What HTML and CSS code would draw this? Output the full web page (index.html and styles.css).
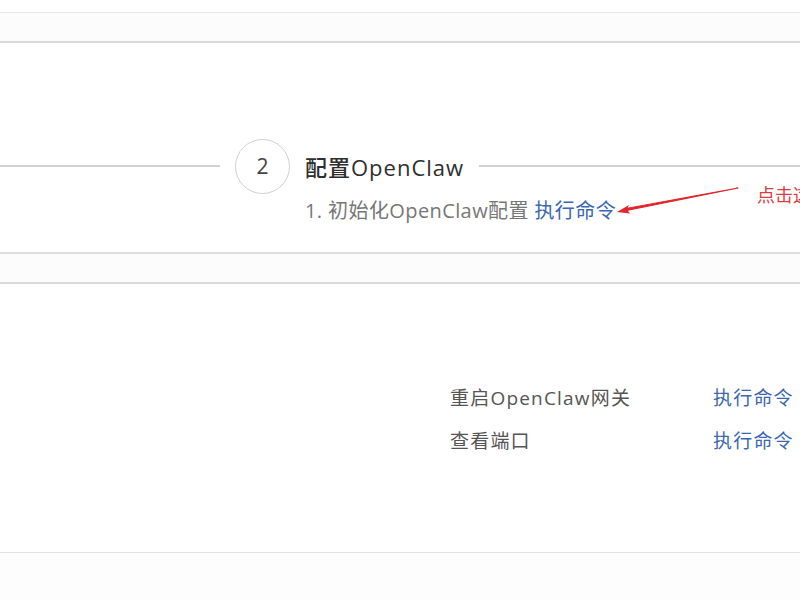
FILE: index.html
```html
<!DOCTYPE html>
<html lang="zh-CN">
<head>
<meta charset="utf-8">
<title>配置OpenClaw</title>
<link rel="stylesheet" href="styles.css">
</head>
<body>
<div class="page">
  <div class="strip-top"></div>
  <div class="band"></div>
  <section class="steps">
    <div class="step-row">
      <div class="line line-left"></div>
      <div class="circle">2</div>
      <div class="step-title">配置OpenClaw</div>
      <div class="line line-right"></div>
    </div>
    <div class="step-desc">1. 初始化OpenClaw配置 <a class="link" href="#">执行命令</a></div>
    <svg class="arrow" width="140" height="40" viewBox="0 0 140 40">
      <path d="M124 6 L12 26.5 L12.6 28.5 Z" fill="#e2262b" stroke="#e2262b" stroke-width="1.2" stroke-linejoin="round"/>
      <path d="M3 30 L15 23 L13 27.5 L16 31.5 Z" fill="#e2262b"/>
    </svg>
    <div class="note">点击这里</div>
  </section>
  <div class="band"></div>
  <section class="commands">
    <div class="cmd-row"><span class="cmd-label">重启OpenClaw网关</span><a class="link" href="#">执行命令</a></div>
    <div class="cmd-row"><span class="cmd-label">查看端口</span><a class="link" href="#">执行命令</a></div>
  </section>
  <div class="rest"></div>
</div>
</body>
</html>
```
FILE: styles.css
```css
html, body {
  margin: 0;
  padding: 0;
  background: #ffffff;
  overflow: hidden;
}
.page {
  width: 800px;
  height: 600px;
  overflow: hidden;
  font-family: "Open Sans", "Noto Sans CJK SC", sans-serif;
  color: #333;
}
.strip-top {
  height: 12px;
  border-bottom: 1px solid #e6e6e6;
  background: #fff;
}
.band {
  height: 28px;
  background: #fcfcfc;
  border-bottom: 2px solid #d9d9d9;
}
.steps {
  position: relative;
  height: 211px;
  box-sizing: border-box;
  padding-top: 95px;
  border-bottom: 2px solid #dedede;
  background: #fff;
}
.step-row {
  display: flex;
  align-items: center;
  height: 56px;
}
.line {
  height: 2px;
  background: #d2d2d2;
}
.line-left { width: 220px; }
.line-right { flex: 1; margin-left: 15px; }
.circle {
  margin-left: 15px;
  width: 53px;
  height: 53px;
  border: 1px solid #d0d0d0;
  border-radius: 50%;
  display: flex;
  align-items: center;
  justify-content: center;
  font-size: 21px;
  color: #444;
  background: #fff;
}
.step-title {
  margin-left: 15px;
  font-size: 22px;
  font-weight: 500;
  letter-spacing: 1px;
  color: #2e2e2e;
}
.step-desc {
  padding-left: 305px;
  margin-top: 1px;
  font-size: 20px;
  letter-spacing: 0.4px;
  color: #777;
}
.link {
  color: #3a67b0;
  text-decoration: none;
}
.arrow {
  position: absolute;
  left: 614px;
  top: 139px;
}
.note {
  position: absolute;
  left: 757px;
  top: 138px;
  font-size: 18px;
  color: #e03a3e;
  white-space: nowrap;
}
.commands {
  height: 269px;
  border-bottom: 1px solid #e3e3e3;
  background: #fff;
  display: flex;
  flex-direction: column;
  padding-top: 98px;
  box-sizing: border-box;
  gap: 10px;
}
.cmd-row {
  display: flex;
  padding-left: 450px;
  font-size: 19px;
  letter-spacing: 1.2px;
  line-height: 33px;
}
.cmd-label {
  width: 263px;
  color: #555;
}
.rest {
  height: 60px;
  background: #fdfdfd;
}
```
